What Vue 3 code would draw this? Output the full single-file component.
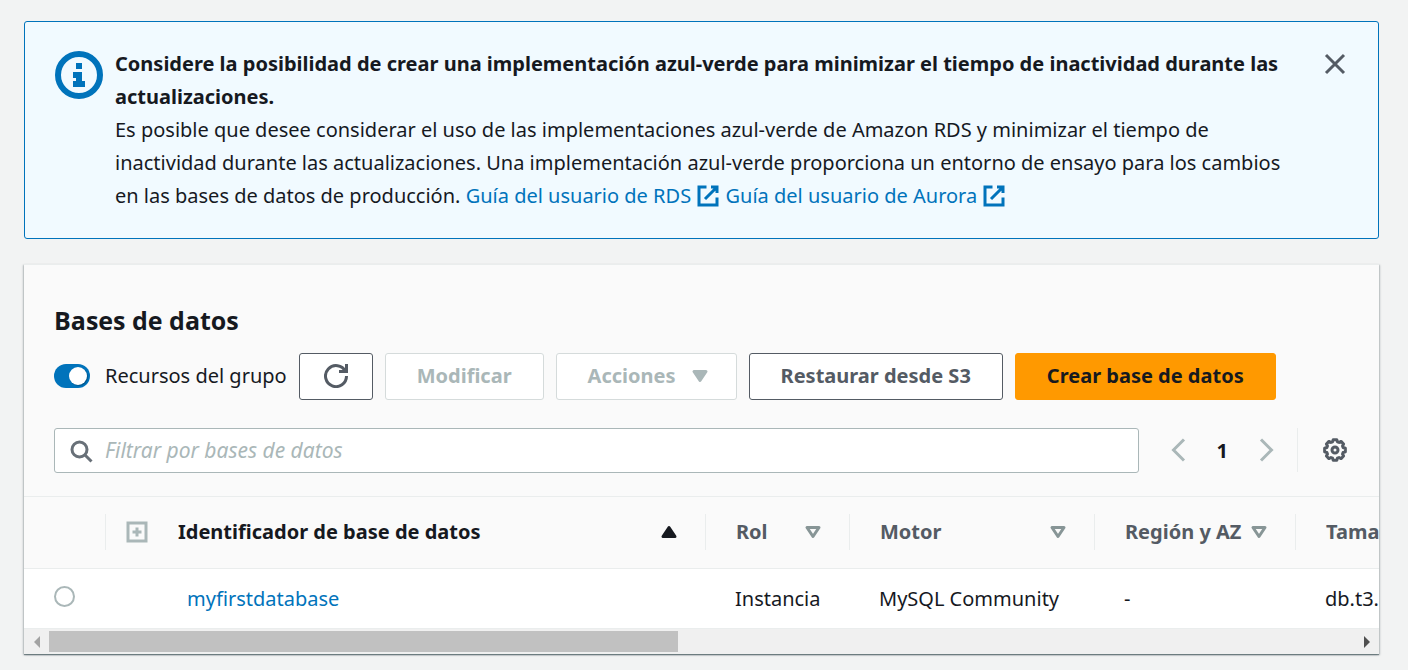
<script setup>
import { ref } from 'vue'

const grouped = ref(true)
const filter = ref('')
const selected = ref('')

const columns = [
  { key: 'role', label: 'Rol' },
  { key: 'engine', label: 'Motor' },
  { key: 'region', label: 'Región y AZ' },
  { key: 'size', label: 'Tamaño' },
]
const rows = [
  { id: 'myfirstdatabase', role: 'Instancia', engine: 'MySQL Community', region: '-', size: 'db.t3.micro' },
]

function gearPath() {
  const teeth = 8
  const points = []
  for (let i = 0; i < teeth; i++) {
    const mid = (i * 2 * Math.PI) / teeth
    for (const [offset, radius] of [[-0.29, 5.7], [-0.17, 7], [0.17, 7], [0.29, 5.7]]) {
      const a = mid + offset
      points.push(`${(8 + radius * Math.sin(a)).toFixed(2)} ${(8 - radius * Math.cos(a)).toFixed(2)}`)
    }
  }
  return `M${points.join('L')}Z`
}
const gear = gearPath()
</script>

<template>
  <main class="page">
    <section class="banner" aria-label="Información">
      <svg class="info" viewBox="0 0 16 16" aria-hidden="true">
        <circle cx="8" cy="8" r="7" fill="none" stroke="currentColor" stroke-width="2" />
        <path fill="currentColor" d="M7 4h2v2H7zM6 7h3v3h1v2H6v-2h1V9H6z" />
      </svg>
      <div class="message">
        <strong>Considere la posibilidad de crear una implementación azul-verde para minimizar el tiempo de inactividad durante las actualizaciones.</strong>
        <p>
          Es posible que desee considerar el uso de las implementaciones azul-verde de Amazon RDS y minimizar el tiempo de inactividad durante las actualizaciones. Una implementación azul-verde proporciona un entorno de ensayo para los cambios en las bases de datos de producción.
          <a href="#rds">Guía del usuario de RDS
            <svg class="icon external" viewBox="0 0 16 16" aria-hidden="true"><path d="M10 2h4v4M6 10l8-8M14 9v5H2V2h5" /></svg></a>{{ ' ' }}<a href="#aurora">Guía del usuario de Aurora
            <svg class="icon external" viewBox="0 0 16 16" aria-hidden="true"><path d="M10 2h4v4M6 10l8-8M14 9v5H2V2h5" /></svg></a>
        </p>
      </div>
      <button class="plain close" type="button" aria-label="Cerrar">
        <svg class="icon" viewBox="0 0 16 16"><path d="M2 2l12 12M14 2L2 14" /></svg>
      </button>
    </section>

    <section class="panel">
      <header class="head">
        <h2>Bases de datos</h2>
        <div class="actions">
          <label class="toggle">
            <input v-model="grouped" type="checkbox" role="switch" />
            <span>Recursos del grupo</span>
          </label>
          <button class="btn" type="button" aria-label="Actualizar">
            <svg class="icon" viewBox="0 0 16 16"><path d="M10 5h5V0M15 8a7 7 0 1 1-.7-3" /></svg>
          </button>
          <button class="btn" type="button" disabled>Modificar</button>
          <button class="btn menu" type="button" disabled>
            Acciones
            <svg class="icon caret solid" viewBox="0 0 16 16" aria-hidden="true"><path d="M4 5h8l-4 6z" /></svg>
          </button>
          <button class="btn" type="button">Restaurar desde S3</button>
          <button class="btn primary" type="button">Crear base de datos</button>
        </div>
        <div class="tools">
          <label class="search">
            <svg class="icon" viewBox="0 0 16 16" aria-hidden="true"><circle cx="7" cy="7" r="5" /><path d="M15 15l-4.5-4.5" /></svg>
            <input v-model="filter" type="text" placeholder="Filtrar por bases de datos" aria-label="Filtrar por bases de datos" />
          </label>
          <nav class="pages" aria-label="Paginación">
            <button class="plain" type="button" disabled aria-label="Página anterior">
              <svg class="icon" viewBox="0 0 16 16"><path d="M12 1L5 8l7 7" /></svg>
            </button>
            <button class="plain current" type="button">1</button>
            <button class="plain" type="button" disabled aria-label="Página siguiente">
              <svg class="icon" viewBox="0 0 16 16"><path d="M4 1l7 7-7 7" /></svg>
            </button>
          </nav>
          <div class="prefs">
            <button class="plain" type="button" aria-label="Preferencias">
              <svg class="icon" viewBox="0 0 16 16"><path class="gear" :d="gear" /><circle cx="8" cy="8" r="2" /></svg>
            </button>
          </div>
        </div>
      </header>

      <div class="scroller">
        <table>
          <colgroup>
            <col class="c-select" /><col class="c-id" /><col class="c-role" /><col class="c-engine" /><col class="c-region" /><col class="c-size" />
          </colgroup>
          <thead>
            <tr>
              <td></td>
              <th scope="col" class="sorted" aria-sort="ascending">
                <div class="cell">
                  <button class="plain expand" type="button" aria-label="Expandir todo">
                    <svg class="icon" viewBox="0 0 16 16"><path d="M2 2h12v12H2zM8 5v6M5 8h6" /></svg>
                  </button>
                  <span>Identificador de base de datos</span>
                  <svg class="icon caret solid" viewBox="0 0 16 16" aria-hidden="true"><path d="M4 11h8L8 5z" /></svg>
                </div>
              </th>
              <th v-for="c in columns" :key="c.key" scope="col">
                <div class="cell">
                  <span>{{ c.label }}</span>
                  <svg class="icon caret" viewBox="0 0 16 16" aria-hidden="true"><path d="M4 5h8l-4 6z" /></svg>
                </div>
              </th>
            </tr>
          </thead>
          <tbody>
            <tr v-for="r in rows" :key="r.id">
              <td class="pick"><input v-model="selected" type="radio" name="db" :value="r.id" :aria-label="r.id" /></td>
              <td class="name"><a :href="'#' + r.id">{{ r.id }}</a></td>
              <td v-for="c in columns" :key="c.key">{{ r[c.key] }}</td>
            </tr>
          </tbody>
        </table>
      </div>
      <div class="scrollbar">
        <button class="plain arrow" type="button" disabled aria-label="Desplazar a la izquierda">
          <svg viewBox="0 0 6 12"><path fill="currentColor" d="M6 0v12L0 6z" /></svg>
        </button>
        <div class="track"><div class="thumb"></div></div>
        <button class="plain arrow" type="button" aria-label="Desplazar a la derecha">
          <svg viewBox="0 0 6 12"><path fill="currentColor" d="M0 0v12l6-6z" /></svg>
        </button>
      </div>
    </section>
  </main>
</template>

<style>
body {
  background: #f2f3f3;
}
</style>

<style scoped>
.page {
  box-sizing: border-box;
  padding: 21px 29px 15px 24px;
  font-family: 'Noto Sans', 'Open Sans', sans-serif;
  font-size: 20px;
  line-height: 33px;
  color: #16191f;
}
.page * {
  box-sizing: border-box;
}
button,
input {
  font: inherit;
  color: inherit;
  margin: 0;
}
a {
  color: #0073bb;
  text-decoration: none;
}
.icon {
  display: block;
  flex: none;
  width: 24px;
  height: 24px;
  fill: none;
  stroke: currentColor;
  stroke-width: 2;
}
.plain {
  display: flex;
  padding: 0;
  border: 0;
  background: none;
}
.banner {
  display: flex;
  padding: 25px 30px 26px;
  border: 1px solid #0073bb;
  border-radius: 3px;
  background: #f1faff;
}
.info {
  flex: none;
  width: 48px;
  height: 48px;
  margin: 4px 12px 0 0;
  color: #0073bb;
}
.message {
  flex: 1;
}
.message strong {
  display: block;
  font-weight: 700;
}
.message p {
  margin: 0;
}
.external {
  display: inline-block;
  vertical-align: -5px;
}
.close {
  margin: 5px 1px 0 20px;
  height: 24px;
  color: #545b64;
}
.panel {
  margin-top: 25px;
  border-top: 1px solid #eaeded;
  background: #fff;
  box-shadow: 0 1px 1px rgba(0, 28, 36, 0.4), 1px 1px 2px rgba(0, 28, 36, 0.2), -1px 1px 2px rgba(0, 28, 36, 0.2);
}
.head {
  padding: 37px 30px 23px;
  border-bottom: 1px solid #eaeded;
  background: #fafafa;
}
h2 {
  margin: 0 0 15px;
  font-family: 'Open Sans', 'Noto Sans', sans-serif;
  font-size: 25px;
  line-height: 36px;
}
.actions {
  display: flex;
  align-items: center;
  gap: 12px;
}
.toggle {
  display: flex;
  align-items: center;
  gap: 15px;
  padding-bottom: 1px;
}
.toggle input {
  display: flex;
  justify-content: flex-end;
  appearance: none;
  width: 36px;
  height: 24px;
  padding: 3px;
  border-radius: 12px;
  background: #0073bb;
}
.toggle input::before {
  content: '';
  width: 18px;
  height: 18px;
  border-radius: 50%;
  background: #fff;
  box-shadow: 1px 1px 1px rgba(0, 0, 0, 0.25);
}
.toggle span {
  padding-bottom: 2px;
}
.btn {
  display: flex;
  align-items: center;
  gap: 12px;
  height: 47px;
  padding: 0 31px 2px;
  border: 1px solid #545b64;
  border-radius: 3px;
  background: #fff;
  color: #545b64;
  font-weight: 700;
}
.btn[aria-label] {
  padding: 0 24px 1px;
}
.btn.menu {
  padding-right: 24px;
}
.btn:disabled {
  border-color: #d5dbdb;
  color: #aab7b8;
}
.primary {
  border-color: #ff9900;
  background: #ff9900;
  color: #16191f;
}
.solid {
  fill: currentColor;
}
.caret {
  stroke-linejoin: round;
}
.tools {
  display: flex;
  align-items: flex-start;
  margin-top: 28px;
}
.search {
  display: flex;
  flex: 1;
  align-items: center;
  height: 45px;
  padding: 0 14px;
  gap: 12px;
  border: 1px solid #aab7b8;
  border-radius: 3px;
  background: #fff;
  color: #687078;
}
.search input {
  flex: 1;
  min-width: 0;
  padding: 0;
  border: 0;
  outline: 0;
  background: none;
  color: #16191f;
  font-size: 21px;
}
.search input::placeholder {
  color: #aab7b8;
  font-style: italic;
  opacity: 1;
}
.pages {
  display: flex;
  align-items: center;
  gap: 27px;
  height: 44px;
  padding: 0 18px 0 27px;
  color: #aab7b8;
}
.current {
  color: #16191f;
  font-weight: 700;
}
.prefs {
  display: flex;
  align-items: center;
  height: 44px;
  padding: 0 2px 0 25px;
  border-left: 1px solid #eaeded;
  color: #545b64;
}
.gear {
  stroke-linejoin: round;
}
.scroller {
  overflow: hidden;
}
table {
  table-layout: fixed;
  width: 1600px;
  border-collapse: collapse;
}
.c-select { width: 81px; }
.c-id { width: 600px; }
.c-role { width: 144px; }
.c-engine { width: 245px; }
.c-region { width: 201px; }
thead {
  background: #fafafa;
}
th {
  padding: 17px 0 18px;
  color: #545b64;
  font-weight: 700;
  text-align: left;
}
thead tr,
tbody tr {
  border-bottom: 1px solid #eaeded;
}
.cell {
  display: flex;
  align-items: center;
  justify-content: space-between;
  height: 36px;
  padding: 0 24px 0 30px;
  border-left: 1px solid #eaeded;
}
.cell span {
  padding-bottom: 2px;
}
.cell .caret {
  color: #879596;
}
.sorted,
.cell .solid {
  color: #16191f;
}
.sorted .cell {
  padding-left: 19px;
}
.sorted span {
  flex: 1;
}
.expand {
  margin-right: 29px;
  color: #aab7b8;
}
tbody td {
  height: 60px;
  padding: 0 0 0 30px;
}
tbody .name {
  padding-left: 82px;
}
.pick input {
  display: block;
  appearance: none;
  width: 21px;
  height: 21px;
  margin-bottom: 4px;
  border: 2px solid #aab7b8;
  border-radius: 50%;
  background: #fff;
}
.scrollbar {
  display: flex;
  align-items: center;
  height: 25px;
  background: #f0f0f0;
}
.arrow {
  align-items: center;
  justify-content: center;
  width: 25px;
  height: 25px;
  color: #505050;
}
.arrow:disabled {
  color: #a3a3a3;
}
.arrow svg {
  width: 6px;
  height: 12px;
}
.track {
  flex: 1;
}
.thumb {
  width: 48.2%;
  height: 21px;
  background: #c1c1c1;
}
</style>
